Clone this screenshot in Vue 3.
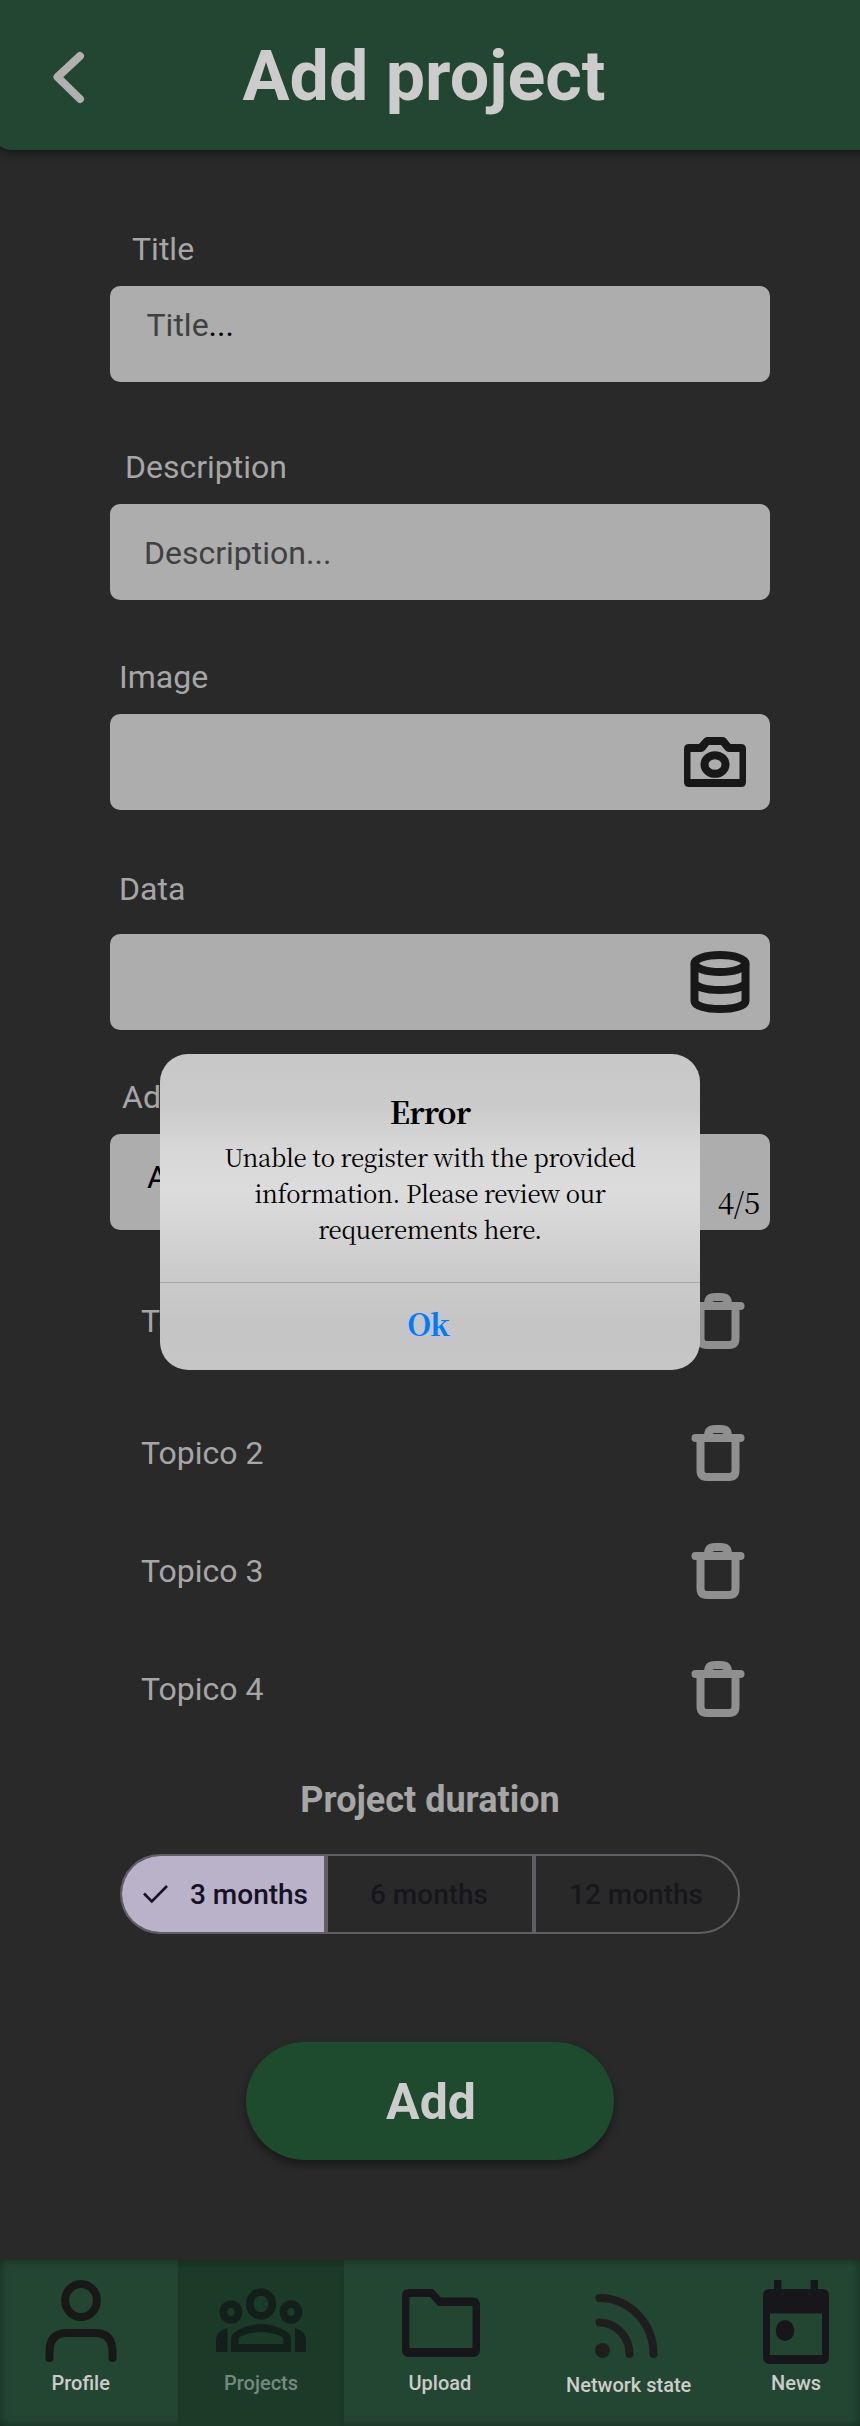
<script setup>
const topics = ['Topico 1', 'Topico 2', 'Topico 3', 'Topico 4']
const durations = [
  { text: '3 months', selected: true },
  { text: '6 months' },
  { text: '12 months' },
]
</script>

<template>
  <div class="screen">
    <header class="header">
      <svg class="back" width="40" height="60" viewBox="0 0 40 60">
        <path d="M32 10 9.500 31 32 53" />
      </svg>
      <h1>Add project</h1>
    </header>

    <main class="content">
      <section class="field field-title">
        <label>Title</label>
        <div class="box"><span class="hint">Title<b>...</b></span></div>
      </section>
      <section class="field field-description">
        <label>Description</label>
        <div class="box"><span class="hint">Description...</span></div>
      </section>
      <section class="field field-image">
        <label>Image</label>
        <div class="box">
          <svg class="camera" width="62" height="50" viewBox="0 0 62 50">
            <path fill-rule="evenodd" d="M5 7H15L20 1.500Q21.200 0 23 0H39Q40.800 0 42 1.500L46.500 7H57Q62 7 62 12V45Q62 50 57 50H5Q0 50 0 45V12Q0 7 5 7ZM6.500 15V42H55.500V15H45Q42.500 15 41 13L37 8H25L21 13Q19.500 15 17 15Z" />
            <path fill-rule="evenodd" d="M31 14.200A14.500 13.300 0 0 1 31 40.800A14.500 13.300 0 0 1 31 14.200ZM31 22.200A6.500 5.300 0 0 0 31 32.800A6.500 5.300 0 0 0 31 22.200Z" />
          </svg>
        </div>
      </section>
      <section class="field field-data">
        <label>Data</label>
        <div class="box">
          <svg class="database" width="60" height="62" viewBox="0 0 60 62">
            <ellipse cx="30" cy="12.500" rx="25.500" ry="8.500" />
            <path d="M4.500 12.500V50C4.500 54.500 15 58 30 58S55.500 54.500 55.500 50V12.500M4.500 31C4.500 35.500 15 39 30 39S55.500 35.500 55.500 31" />
          </svg>
        </div>
      </section>
      <section class="field field-topics">
        <label>Add topic</label>
        <div class="box"><span class="hint">Add</span><span class="count">4/5</span></div>
      </section>

      <ul class="topics">
        <li v-for="t in topics" :key="t">
          <span>{{ t }}</span>
          <svg width="54" height="58" viewBox="0 0 54 58">
            <path d="M9.500 14V46Q9.500 53 16 53H38Q44.500 53 44.500 46V14M17 13V12Q17 5 24 5H30Q37 5 37 12V13" />
            <path class="lid" d="M4.500 14H49.500" />
            <path class="corner" d="M13.500 18V49H40.500V18Z" />
          </svg>
        </li>
      </ul>

      <h2>Project duration</h2>
      <div class="segments">
        <div v-for="d in durations" :key="d.text" class="segment" :class="{ selected: d.selected }">
          <svg v-if="d.selected" width="26" height="20" viewBox="0 0 26 20">
            <path d="M1 9.500 8.800 17.500 24 2" />
          </svg>
          <span>{{ d.text }}</span>
        </div>
      </div>
      <button class="add">Add</button>
    </main>

    <nav class="nav">
      <div class="tab profile">
        <svg width="72" height="84" viewBox="0 0 72 84">
          <ellipse class="line" cx="36" cy="20.500" rx="15.900" ry="16.500" />
          <path class="line" d="M4.500 78V72Q4.500 53 22 53H50Q67.500 53 67.500 72V78" />
        </svg>
        <span>Profile</span>
      </div>
      <div class="tab projects">
        <svg width="90" height="84" viewBox="0 0 90 84">
          <ellipse class="line head" cx="45" cy="24" rx="11.300" ry="12" />
          <ellipse class="line head" cx="15" cy="32" rx="7.600" ry="8" />
          <ellipse class="line head" cx="75" cy="32" rx="7.600" ry="8" />
          <path fill-rule="evenodd" d="M15 72V60Q15 54 20.500 51Q45 37 69.500 51Q75 54 75 60V72ZM22.500 64H67.500V59Q67.500 57.500 65.500 56.500Q45 47.500 24.500 56.500Q22.500 57.500 22.500 59Z" />
          <path d="M0 72V60Q0 51 11.500 48V72ZM90 72V60Q90 51 79 48V72Z" />
        </svg>
        <span>Projects</span>
      </div>
      <div class="tab upload">
        <svg width="78" height="84" viewBox="0 0 78 84">
          <path fill-rule="evenodd" d="M7 9H31L39 17.500H71Q78 17.500 78 24.500V70Q78 77 71 77H7Q0 77 0 70V16Q0 9 7 9ZM7.500 17V68H70.500V26H36L28 17Z" />
        </svg>
        <span>Upload</span>
      </div>
      <div class="tab network">
        <svg width="64" height="84" viewBox="0 0 64 84">
          <path class="line" d="M4.500 18C34 18 58.500 43 58.500 74M4.500 42.500C20 42.500 34.500 56 34.500 74" />
          <circle cx="7.500" cy="70.500" r="7.500" />
        </svg>
        <span>Network state</span>
      </div>
      <div class="tab news">
        <svg width="66" height="86" viewBox="0 0 66 86">
          <path fill-rule="evenodd" d="M11 0H18.500V9H47.500V0H55V9H59Q66 9 66 16V77Q66 84 59 84H7Q0 84 0 77V16Q0 9 7 9H11ZM7 33.500V75H59V33.500Z" />
          <ellipse cx="22" cy="50.500" rx="9.300" ry="10.600" />
        </svg>
        <span>News</span>
      </div>
    </nav>

    <div class="dialog">
      <div class="message">
        <h3>Error</h3>
        <p>Unable to register with the provided<br />information. Please review our<br />requerements here.</p>
      </div>
      <button class="ok">Ok</button>
    </div>
  </div>
</template>

<style>
body { background: #292929; }
</style>

<style scoped>
* { box-sizing: border-box; }
h1, h2, h3, p, ul { margin: 0; padding: 0; }
button { border: 0; padding: 0; }
.screen {
  position: relative;
  width: 860px;
  height: 2426px;
  overflow: hidden;
  display: flex;
  flex-direction: column;
  background: #292929;
  color: #a6a6a6;
  font-family: Roboto, sans-serif;
}
svg { display: block; flex: none; }
.header {
  flex: none;
  height: 150px;
  width: 880px;
  margin-left: -8px;
  padding-left: 56px;
  display: flex;
  align-items: flex-start;
  background: #234632;
  border-radius: 0 0 0 20px;
  box-shadow: 0 4px 10px rgba(0, 0, 0, .4);
}
.back { margin-top: 46px; fill: none; stroke: #b0b0b0; stroke-width: 8; stroke-linecap: round; stroke-linejoin: round; }
.header h1 { margin: 41px 0 0 154.500px; font-size: 70px; line-height: 70px; font-weight: 700; color: #ccc; }
.content { flex: 1; display: flex; flex-direction: column; padding: 83px 0 0 110px; }
.field { width: 660px; display: flex; flex-direction: column; gap: 21px; }
.field label { font-size: 32px; line-height: 32px; }
.field-title label { padding-left: 22px; }
.field-description { margin-top: 69px; }
.field-description label { padding-left: 15px; }
.field-image { margin-top: 61px; }
.field-image label { padding-left: 9px; }
.field-data { margin-top: 63px; gap: 29px; }
.field-data label { padding-left: 9px; }
.field-topics { margin-top: 51px; }
.field-topics label { padding-left: 12px; }
.box { display: flex; align-items: flex-start; height: 96px; background: #adadad; border-radius: 10px; }
.hint { font-size: 32px; line-height: 32px; color: #404040; }
.hint b { font-weight: 400; color: #000; }
.field-title .hint { padding: 23px 0 0 36.500px; }
.field-description .hint { padding: 33px 0 0 34px; }
.field-topics .hint { padding: 27px 0 0 37px; color: #000; }
.camera { margin: 23px 0 0 574px; fill: #181818; }
.database { margin: 17px 0 0 580px; fill: none; stroke: #181818; stroke-width: 8; }
.count { margin: 51px 10px 0 auto; font-family: "Noto Serif CJK SC", "Noto Serif", "Liberation Serif", serif; font-size: 29.500px; line-height: 32px; letter-spacing: -.2px; color: #000; }
.topics { list-style: none; display: flex; flex-direction: column; margin-top: 62px; width: 635px; }
.topics li { display: flex; justify-content: space-between; height: 118px; padding-left: 31px; font-size: 32px; line-height: 58px; }
.topics li:first-child { height: 132px; }
.topics svg { fill: none; stroke: #8f8f8f; stroke-width: 8; stroke-linecap: round; }
.topics svg .corner { stroke: none; }
h2 { margin-top: 4px; width: 640px; text-align: center; font-size: 36px; line-height: 36px; font-weight: 700; }
.segments { display: grid; grid-template-columns: 202px 208px 206px; flex: none; width: 620px; height: 80px; margin: 36px 0 0 10px; border: 2px solid #605d64; border-radius: 40px; overflow: hidden; }
.segment { display: flex; align-items: center; justify-content: center; font-size: 28px; font-weight: 500; color: #17161b; white-space: nowrap; }
.segment + .segment { border-left: 4px solid #605d64; padding-right: 2px; }
.segment.selected { background: #bab2c8; color: #161226; gap: 21px; padding-left: 5px; }
.segment svg { fill: none; stroke: #161226; stroke-width: 2.600; }
.add { flex: none; width: 368px; height: 118px; margin: 108px 0 0 136px; padding: 1px 0 0 2px; border-radius: 59px; background: #1e4a2e; box-shadow: 0 5px 8px rgba(0, 0, 0, .4); color: #ccc; font: 700 50px/118px Roboto, sans-serif; }
.nav { flex: none; height: 166px; display: grid; grid-template-columns: 178px 166px 193px 184px 139px; background: #234632; box-shadow: inset 0 0 10px rgba(0, 0, 0, .4); }
.tab { display: flex; flex-direction: column; align-items: flex-start; font-size: 20px; line-height: 24px; font-weight: 500; color: #ccc; white-space: nowrap; }
.tab svg { height: 86px; margin-top: 20px; fill: #17161b; }
.tab .line { fill: none; stroke: #181818; stroke-width: 8; stroke-linecap: round; }
.tab span { margin-top: 5px; }
.profile svg { margin-left: 45px; margin-top: 19px; }
.profile span { margin-left: 51.500px; margin-top: 6px; }
.projects { background: #1b3b28; box-shadow: inset 0 10px 10px -8px rgba(0, 0, 0, .3); color: #77897e; }
.projects svg { margin-left: 38px; margin-top: 19px; fill: #131f1a; }
.projects .head { stroke: #131f1a; stroke-width: 7.600; }
.projects span { margin-left: 46px; margin-top: 6px; }
.upload svg { margin-left: 58px; margin-top: 19px; }
.upload span { margin-left: 64.500px; margin-top: 6px; }
.network svg { margin-left: 58px; margin-top: 19px; fill: #1e1e1e; }
.network .line { stroke: #1e1e1e; }
.network span { margin: 8px 0 0 29px; }
.news svg { margin-left: 42px; }
.news span { margin-left: 50px; }
.dialog {
  position: absolute;
  left: 160px;
  top: 1054px;
  width: 540px;
  height: 316px;
  border-radius: 28px;
  overflow: hidden;
  background: linear-gradient(#c7c7c7 0, #cbcbcb 17%, #d8d8d8 31%, #dcdcdc 43%, #d5d5d5 55%, #cbcbcb 70%, #c5c5c5 85%, #c6c6c6);
  font-family: "Noto Serif CJK SC", "Noto Serif", "Liberation Serif", serif;
  color: #000;
  text-align: center;
}
.message { height: 229px; padding-top: 39px; border-bottom: 1px solid #a9a9a9; }
.message h3 { font-size: 30.500px; line-height: 36px; font-weight: 700; letter-spacing: -.8px; }
.message p { font-size: 24px; line-height: 36px; margin-top: 10px; letter-spacing: -.33px; }
.ok { display: block; width: 100%; height: 87px; padding: 0 4px 7px 0; background: none; color: #007aff; font: inherit; font-size: 30.500px; font-weight: 700; letter-spacing: -1px; }
</style>
